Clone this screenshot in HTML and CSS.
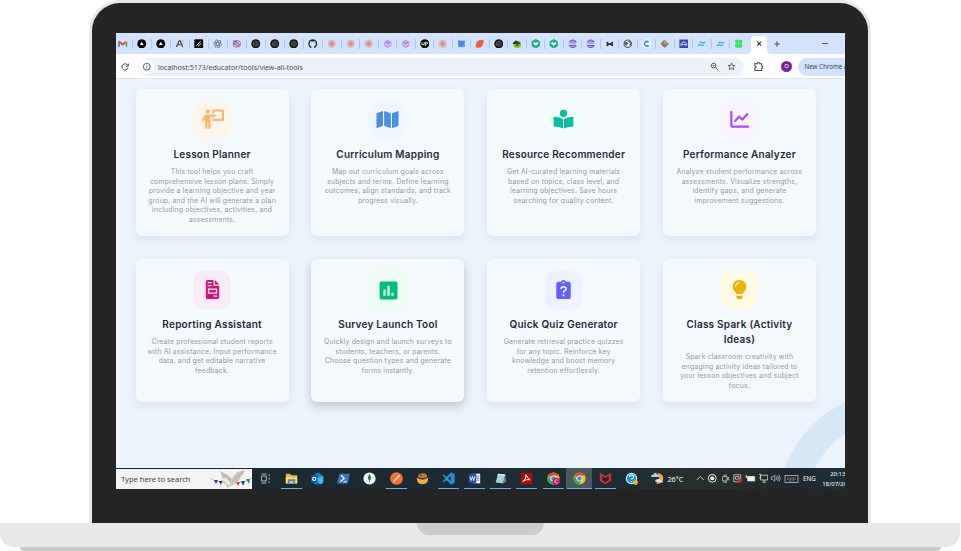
FILE: index.html
```html
<!DOCTYPE html>
<html lang="en">
<head>
<meta charset="utf-8">
<title>Educator tools</title>
<link rel="stylesheet" href="styles.css">
</head>
<body>
<svg class="defs" aria-hidden="true">
  <symbol id="gmail" viewBox="0 0 10 10"><path d="M1 8.500V2.600" stroke="#4285f4" stroke-width="1.800"/><path d="M9 8.500V2.600" stroke="#34a853" stroke-width="1.800"/><path d="M1 2.600L5 5.800L9 2.600" fill="none" stroke="#ea4335" stroke-width="1.900"/><path d="M8.100 2h1.800v1.800H8.100z" fill="#fbbc04"/></symbol>
  <symbol id="tri" viewBox="0 0 10 10"><circle cx="5" cy="5" r="4.700" fill="#000"/><path d="M5 3l2 3.300H3z" fill="#fff"/></symbol>
  <symbol id="ak" viewBox="0 0 10 10"><path d="M1.500 8.500L4.400 2h1L8 8.500M3 6h3" fill="none" stroke="#444" stroke-width="1.200"/><path d="M6.200 3.400L9 1.400M6.500 4.400l2.300.8" stroke="#b98567" stroke-width=".9"/></symbol>
  <symbol id="sq" viewBox="0 0 10 10"><rect x=".3" y=".3" width="9.400" height="9.400" rx="1.400" fill="#050505"/><path d="M2.500 7L7 2.400M4.300 7.500l3.400-3.200" stroke="#fff" stroke-width="1"/></symbol>
  <symbol id="atom" viewBox="0 0 10 10"><g fill="none" stroke="#6c7589" stroke-width=".8"><ellipse cx="5" cy="5" rx="4.500" ry="1.500" transform="rotate(10 5 5)"/><ellipse cx="5" cy="5" rx="4.500" ry="1.500" transform="rotate(70 5 5)"/><ellipse cx="5" cy="5" rx="4.500" ry="1.500" transform="rotate(130 5 5)"/></g></symbol>
  <symbol id="swirl" viewBox="0 0 10 10"><ellipse cx="5" cy="5" rx="3.800" ry="3.400" fill="none" stroke="#d0607f" stroke-width="1.100"/><path d="M1 2Q5 2 7 5T4 6 5.500 4" fill="none" stroke="#6a6fa3" stroke-width="1.100"/></symbol>
  <symbol id="gpt" viewBox="0 0 10 10"><circle cx="5" cy="5" r="4.700" fill="#101010"/><g fill="none" stroke="#8c8c8c" stroke-width=".6"><circle cx="5" cy="5" r="1.300"/><path d="M5 2.100l2.500 1.400v3L5 7.900 2.500 6.500v-3z"/></g></symbol>
  <symbol id="git" viewBox="0 0 10 10"><circle cx="5" cy="5" r="4.700" fill="#252b35"/><path d="M3.600 9.700V7.800C2 7.400 1.700 6.200 1.800 4.700c0-.7.3-1.100.6-1.500v-1.200l1.300.6h2.600l1.300-.6v1.200c.3.400.6.800.6 1.500.1 1.500-.2 2.700-1.800 3.100v1.900z" fill="#d3e3fd"/></symbol>
  <symbol id="claude" viewBox="0 0 10 10"><path d="M5 .6v8.800M.6 5h8.800M2.800 1.200l4.400 7.600M7.200 1.200L2.800 8.800M1.200 2.800l7.600 4.400M1.200 7.200l7.600-4.400" stroke="#df7a5e" stroke-width=".75"/></symbol>
  <symbol id="cube" viewBox="0 0 10 10"><path d="M5 .7l3.900 2.200v4.300L5 9.400 1.100 7.200V2.900z" fill="#b996ea"/><path d="M1.600 5.200L5 6.800l3.400-1.600" stroke="#f3e9ff" stroke-width=".8" fill="none"/></symbol>
  <symbol id="up" viewBox="0 0 10 10"><circle cx="5" cy="5" r="4.800" fill="#080808"/><path d="M2 3.500v2q1.200 1.400 2.400 0v-2M5.600 7.500v-4q2.800-.6 2.300 1.300-.7 1.200-2.200.3" fill="none" stroke="#fff" stroke-width=".9"/></symbol>
  <symbol id="flag" viewBox="0 0 10 10"><path d="M2 2h6.500L7.500 5l1 3H2z" fill="#438ee0" stroke="#438ee0" stroke-width=".6"/><path d="M1.800 1.200v7.300" stroke="#438ee0"/></symbol>
  <symbol id="leaf" viewBox="0 0 10 10"><path d="M2 3Q4 .6 9 .8 9.500 6 7 8.200 4.500 9.500 1 9q-.5-3 1-6z" fill="#f85c36"/></symbol>
  <symbol id="snake" viewBox="0 0 10 10"><path d="M.5 4.500L4 1.500l5 2L5 5z" fill="#223627"/><ellipse cx="5.500" cy="6.500" rx="4" ry="2.700" fill="#7acb13"/><path d="M1 4.500l5 .5 3-.7M4 6.600h3" stroke="#152c18" stroke-width=".9"/></symbol>
  <symbol id="teal" viewBox="0 0 10 10"><path d="M5 .6l3.800 2v4.800L5 9.500 1.200 7.400V2.600z" fill="#12b184" stroke="#12b184" stroke-linejoin="round"/><path d="M2 4.400l1.500-1.200L5 4.300l1.500-1.100L8 4.400l-3 3z" fill="#fff"/></symbol>
  <symbol id="globe" viewBox="0 0 10 10"><circle cx="5" cy="5" r="4.600" fill="#6b62d2"/><path d="M.5 3.600h9v2.800h-9z" fill="#edeaff"/><path d="M1.500 5h7" stroke="#8179d8" stroke-width=".9"/><path d="M3 2.300h4M3 7.900h4" stroke="#d6d2fa" stroke-width=".6"/></symbol>
  <symbol id="mm" viewBox="0 0 10 10"><path d="M2.300 7.500V3.600L5 5.800l2.700-2.200v3.900M2 7.300L4.500 5M5.500 5L8 7.300" fill="none" stroke="#252525" stroke-width="1.200"/></symbol>
  <symbol id="world" viewBox="0 0 10 10"><circle cx="5" cy="5" r="3.900" fill="#e8eefb" stroke="#555b66" stroke-width="1.200"/><path d="M1.500 3l3 .2 1 1.500L3.500 7 1.500 5zM6 1.600l-.5 1.500 2 1L6.500 7 8.500 6 8 2.500z" fill="#555b66"/></symbol>
  <symbol id="cc" viewBox="0 0 10 10"><circle cx="5" cy="5" r="4.800" fill="#fff"/><path d="M7 3.500a2.500 2.500 0 1 0 0 3" fill="none" stroke="#0994f4" stroke-width="1.700"/></symbol>
  <symbol id="color" viewBox="0 0 10 10"><path d="M.4 5L5 .6v4z" fill="#35a154"/><path d="M5 .6L9.600 5 5 6z" fill="#f29325"/><path d="M.4 5L5 4.500v5z" fill="#df4b4b"/><path d="M5 5h4.600L5 9.500z" fill="#2799a9"/></symbol>
  <symbol id="blue" viewBox="0 0 10 10"><path d="M.4.400h9.200v9.200H.4z" fill="#3647b8"/><path d="M2 7V5l3-2.300L8 5v2M3.500 7V5.500h3V7" stroke="#fff" fill="none" stroke-width=".8"/></symbol>
  <symbol id="wind" viewBox="0 0 10 10"><path d="M2.500 4.500Q3.700 2.600 5.300 3.600T8.700 3.300M1.200 7.200Q2.400 5.300 4 6.300T7.400 6" fill="none" stroke="#25afe5" stroke-width="1.300"/></symbol>
  <symbol id="green" viewBox="0 0 10 10"><path d="M1 1.300l3-.8 1 1 1-1 3 .8-.7 3.400.7 3.700-3 1-1-1-1 1-3-1 .7-3.700z" fill="#2ee859"/><path d="M5 1.500v7M2 5h6" stroke="#8dff9f" stroke-width=".5"/></symbol>
  <symbol id="chrome" viewBox="0 0 16 16"><circle cx="8" cy="8" r="7.500" fill="#fbc116"/><path d="M8 8L1.500 4.200A7.500 7.500 0 0 1 14.500 4.300H8z" fill="#e94335"/><path d="M1.500 4.200A7.500 7.500 0 0 0 7.400 15.500L10.500 10 8 8 4.600 9.500z" fill="#31a853"/><circle cx="8" cy="8" r="3.600" fill="#fff"/><circle cx="8" cy="8" r="2.800" fill="#4285f4"/></symbol>
</svg>

<div class="laptop">
  <div class="lid">
    <div class="screen">
      <header class="tabstrip">
        <div class="tabs">
          <i><svg><use href="#gmail"/></svg></i><i><svg><use href="#tri"/></svg></i><i><svg><use href="#tri"/></svg></i><i><svg><use href="#ak"/></svg></i><i><svg><use href="#sq"/></svg></i><i><svg><use href="#atom"/></svg></i><i><svg><use href="#swirl"/></svg></i><i><svg><use href="#gpt"/></svg></i><i><svg><use href="#gpt"/></svg></i><i><svg><use href="#gpt"/></svg></i><i><svg><use href="#git"/></svg></i><i><svg><use href="#claude"/></svg></i><i><svg><use href="#claude"/></svg></i><i><svg><use href="#claude"/></svg></i><i><svg><use href="#cube"/></svg></i><i><svg><use href="#cube"/></svg></i><i><svg><use href="#up"/></svg></i><i><svg><use href="#claude"/></svg></i><i><svg><use href="#flag"/></svg></i><i><svg><use href="#leaf"/></svg></i><i><svg><use href="#gpt"/></svg></i><i><svg><use href="#snake"/></svg></i><i><svg><use href="#teal"/></svg></i><i><svg><use href="#teal"/></svg></i><i><svg><use href="#globe"/></svg></i><i><svg><use href="#globe"/></svg></i><i><svg><use href="#mm"/></svg></i><i><svg><use href="#world"/></svg></i><i><svg><use href="#cc"/></svg></i><i><svg><use href="#color"/></svg></i><i><svg><use href="#blue"/></svg></i><i><svg><use href="#wind"/></svg></i><i><svg><use href="#wind"/></svg></i><i class="last"><svg><use href="#green"/></svg></i>
        </div>
        <div class="active-tab"><svg viewBox="0 0 22 18"><path d="M0 18Q3 17 3 13V4q0-4 4-4h8q4 0 4 4v9q0 4 3 5z" fill="#fff"/><path d="M9.200 5.700l4 4M13.200 5.700l-4 4" stroke="#333" stroke-width="1.100"/></svg></div>
        <svg class="newtab" viewBox="0 0 8 8"><path d="M1.200 4h5.600M4 1.200v5.600" stroke="#555" stroke-width="1.100"/></svg>
        <span class="minimise"></span>
      </header>

      <div class="toolbar">
        <svg class="reload" viewBox="0 0 10 10"><path d="M7.700 3.200A3.100 3.100 0 1 0 8 6" fill="none" stroke="#474747" stroke-width="1"/><path d="M8.300 1.500v2.600H5.700" fill="none" stroke="#474747" stroke-width="1"/></svg>
        <div class="omnibox">
          <span class="site"><svg viewBox="0 0 10 10"><circle cx="5" cy="5" r="3.600" fill="none" stroke="#444" stroke-width=".9"/><path d="M5 4.600v2.300M5 2.800v.9" stroke="#444" stroke-width=".9"/></svg></span>
          <span class="url">localhost:5173/educator/tools/view-all-tools</span>
          <svg class="omni-icon" viewBox="0 0 10 10"><circle cx="4" cy="4" r="2.600" fill="none" stroke="#484848" stroke-width="1"/><path d="M6 6l3 3M2.900 4h2.200" stroke="#484848" stroke-width="1"/></svg>
          <svg class="omni-icon star" viewBox="0 0 10 10"><path d="M5 1.200l1.100 2.500 2.700.3-2 1.800.6 2.700L5 7.100 2.600 8.500l.6-2.700-2-1.800 2.700-.3z" fill="none" stroke="#444" stroke-width=".9"/></svg>
        </div>
        <svg class="ext" viewBox="0 0 12 12"><path d="M2 3h2.700q0-1.300 1.300-1.300T7.300 3H9.500v2.500q1.200 0 1.200 1.200T9.500 8v2.300H2V8q1.300 0 1.300-1.300T2 5.500z" fill="none" stroke="#444" stroke-width="1.100"/></svg>
        <span class="divider"></span>
        <span class="avatar">O</span>
        <span class="update">New Chrome a</span>
      </div>

      <main class="page">
        <svg class="ring" viewBox="0 0 60 66"><circle cx="108" cy="105" r="101.200" fill="none" stroke="#d6e7f7" stroke-width="27.500"/></svg>
        <div class="grid">
          <article class="card">
            <div class="tile orange"><svg viewBox="0 0 24 24"><path d="M12.700 5.500V3.600q0-1 1-1H22q1 0 1 1v7.800q0 1-1 1h-8.300q-1 0-1-1V10.600" fill="none" stroke="currentColor" stroke-width="2.200"/><circle cx="7" cy="3.700" r="2.100"/><path d="M5.300 6.700h9.400q1.700 1.300 0 2.600H10v12.300H7.600v-6H6.700v6H4.300V11.200L2.600 14l-1.900-1.200L3.300 8q.8-1.300 2-1.300z"/></svg></div>
            <h2>Lesson Planner</h2>
            <p>This tool helps you craft<br>comprehensive lesson plans. Simply<br>provide a learning objective and year<br>group, and the AI will generate a plan<br>including objectives, activities, and<br>assessments.</p>
          </article>
          <article class="card">
            <div class="tile sky"><svg viewBox="0 0 24 24"><path d="M.5 5.500L7.300 3v15.500L.5 21zM8.500 3l7 2.500V21l-7-2.500zM16.700 5.500L23.500 3v15.500L16.700 21z"/></svg></div>
            <h2>Curriculum Mapping</h2>
            <p>Map out curriculum goals across<br>subjects and terms. Define learning<br>outcomes, align standards, and track<br>progress visually.</p>
          </article>
          <article class="card">
            <div class="tile mint"><svg viewBox="0 0 24 24"><circle cx="12" cy="5.500" r="3.800"/><path d="M1.700 9.500q6-.5 9.800 2.300v9.700Q8 19.400 1.700 19.400zM22.300 9.500q-6-.5-9.800 2.300v9.700Q16 19.400 22.300 19.400z"/></svg></div>
            <h2>Resource Recommender</h2>
            <p>Get AI-curated learning materials<br>based on topics, class level, and<br>learning objectives. Save hours<br>searching for quality content.</p>
          </article>
          <article class="card">
            <div class="tile violet"><svg viewBox="0 0 24 24"><path d="M3.500 4v14.500q0 1 1 1H21M7.500 13.500l4-4.500 3.500 3 5-5.500" fill="none" stroke="currentColor" stroke-width="2.300" stroke-linecap="round" stroke-linejoin="round"/></svg></div>
            <h2>Performance Analyzer</h2>
            <p>Analyze student performance across<br>assessments. Visualize strengths,<br>identify gaps, and generate<br>improvement suggestions.</p>
          </article>
          <article class="card">
            <div class="tile pink"><svg viewBox="0 0 24 24"><path fill-rule="evenodd" d="M7 2h6v6h6v12a2 2 0 0 1-2 2H7a2 2 0 0 1-2-2V4a2 2 0 0 1 2-2zm0 2.300v1.200h4V4.300zm0 3v1.200h4V7.300zM7.200 11v5.500h9.600V11zm1.300 1.300h7v2.900h-7zM13 18.300v1.200h4v-1.200z"/><path d="M14.300 2L19 6.700h-4.700z"/></svg></div>
            <h2>Reporting Assistant</h2>
            <p>Create professional student reports<br>with AI assistance. Input performance<br>data, and get editable narrative<br>feedback.</p>
          </article>
          <article class="card raised">
            <div class="tile green"><svg viewBox="0 0 24 24"><rect x="3.500" y="3.500" width="17" height="17" rx="2"/><path d="M8.200 11v6M12 7.500V17M15.800 14v3" stroke="#e9fcf2" stroke-width="2.100"/></svg></div>
            <h2>Survey Launch Tool</h2>
            <p>Quickly design and launch surveys to<br>students, teachers, or parents.<br>Choose question types and generate<br>forms instantly.</p>
          </article>
          <article class="card">
            <div class="tile indigo"><svg viewBox="0 0 24 24"><path d="M6.500 4h3a2.600 2.600 0 0 1 5 0h3q2 0 2 2v14q0 2-2 2h-11q-2 0-2-2V6q0-2 2-2z"/><circle cx="12" cy="4.800" r="1" fill="#eef1ff"/><path d="M9.300 11.500Q9.300 9.200 12 9.200t2.700 2.100q0 1.200-1.500 2-1.200.6-1.200 2M12 17v2" fill="none" stroke="#eef1ff" stroke-width="1.800"/></svg></div>
            <h2>Quick Quiz Generator</h2>
            <p>Generate retrieval practice quizzes<br>for any topic. Reinforce key<br>knowledge and boost memory<br>retention effortlessly.</p>
          </article>
          <article class="card">
            <div class="tile yellow"><svg viewBox="0 0 24 24"><path d="M12 2q6.700.300 7 7 0 3.500-2.500 5.500-1 1-1.300 2.300H8.800q-.3-1.300-1.300-2.300Q5 12.500 5 9q.3-6.700 7-7zM8.700 18.400h6.600q0 3.600-2.300 3.600h-2q-2.300 0-2.300-3.600z"/><path d="M7.800 9q.2-3.500 4-4" fill="none" stroke="#fffbe5" stroke-width="1.100" stroke-linecap="round"/></svg></div>
            <h2>Class Spark (Activity<br>Ideas)</h2>
            <p>Spark classroom creativity with<br>engaging activity ideas tailored to<br>your lesson objectives and subject<br>focus.</p>
          </article>
        </div>
      </main>

      <footer class="taskbar">
        <div class="search"><span>Type here to search</span>
          <svg viewBox="0 0 42 20"><path d="M0 9q7 5 17 4M24 14q10 0 18-5" fill="none" stroke="#999" stroke-width=".6"/><path d="M4 11h4l-2 4zM31 12h4l-2 5z" fill="#1d3d9c"/><path d="M9 12h3l-1 4z" fill="#222"/><path d="M13 12h3l-1 4z" fill="#efb527"/><path d="M26 13h4l-2 4z" fill="#df3532"/><path d="M36 10h4l-1 5z" fill="#269c50"/><path d="M13 10q-2-5-3-8 8 3 12 8 3-8 13-9-5 11-11 14l-7 4-1-4-4-3z" fill="#c9c3bd"/><path d="M12 4l9 8M33 3l-10 9M14 12l6 2" stroke="#aaa39d" stroke-width=".8"/><path d="M12 10q3-3 6 1l3 4-3 1z" fill="#eee9e4"/></svg>
        </div>
        <div class="apps">
          <i><svg viewBox="0 0 16 16"><path d="M3 5h6v6H3zM3 2.500h6M3 13.500h6M12.500 2.500v2.500m0 2v2.500m0 2v2" fill="none" stroke="#b7bec0" stroke-width="1.200"/></svg></i>
          <i class="open"><svg viewBox="0 0 16 16"><path d="M1 2h5l2 2h7v10H1z" fill="#f3b72b"/><path d="M1 6h14v8H1z" fill="#ffd969"/><path d="M3.500 14V9h9v5h-2.300v-2.500H6V14z" fill="#398fd5"/></svg></i>
          <i><svg viewBox="0 0 16 16"><path d="M5 2l5-1 5 4v8l-3 2H4V5z" fill="#1681d1"/><path d="M5 9l10-4v8l-3 2z" fill="#41bce9"/><path d="M0 4h8v9H0z" fill="#075ca8"/><circle cx="4" cy="8.500" r="2" fill="none" stroke="#fff" stroke-width="1.300"/></svg></i>
          <i><svg viewBox="0 0 16 16"><path d="M3 2h13l-3 12H0z" fill="#3e73c8"/><path d="M5 4l4 4-5 4M8 12h4" fill="none" stroke="#fff" stroke-width="1.400"/></svg></i>
          <i><svg viewBox="0 0 16 16"><circle cx="8" cy="8" r="7.500" fill="#f8fbf8"/><path d="M8 3q3.500 4 0 8-3.500-4 0-8zM8 11v2" fill="#167c52" stroke="#167c52" stroke-width=".6"/></svg></i>
          <i class="open"><svg viewBox="0 0 16 16"><circle cx="8" cy="8" r="7.800" fill="#ff6c37"/><path d="M4 12l7-8 1 1-6 6z" fill="#fff" stroke="#fff" stroke-width=".6"/></svg></i>
          <i><svg viewBox="0 0 16 16"><path d="M1 7q7 3 14 0 0 8-7 8T1 7z" fill="#f4b13b"/><path d="M2.500 6.500q-.5-5 5.500-5t5.500 5q-5.500 2-11 0z" fill="#c98036"/><circle cx="6" cy="4" r="1" fill="#351e15"/><path d="M3 8q5 2.500 10 0" stroke="#7d4922" fill="none"/></svg></i>
          <i class="open"><svg viewBox="0 0 16 16"><path d="M11 .5l4.500 2v11l-4.500 2-5.500-5.500-3.500 3-1.500-1L4.500 8 .5 4 2 3l3.500 3zm0 4.500L7.500 8 11 11z" fill="#1d94dc" fill-rule="evenodd"/></svg></i>
          <i class="open"><svg viewBox="0 0 16 16"><path d="M7 2h8v12H7z" fill="#f2f5fb"/><path d="M9 5h5M9 7.500h5M9 10h5" stroke="#4369ad"/><path d="M1 3l9-2v14l-9-2z" fill="#2857a5"/><path d="M2.500 5.500l1.300 5 1.700-5 1.500 5 1.500-5" fill="none" stroke="#fff"/></svg></i>
          <i class="open"><svg viewBox="0 0 16 16"><path d="M5 2l9 1-3 11-9-1z" fill="#98ccdc"/><path d="M5 2l9 1-1 2-9-1z" fill="#dcecee"/><path d="M14 3l1 9-4 2z" fill="#5c8c9e"/><path d="M5 6l6 1M4.500 9l6 1" stroke="#bfe2ea"/></svg></i>
          <i class="open"><svg viewBox="0 0 16 16"><rect x="1" y="1" width="14" height="14" rx="1.500" fill="#b70b08"/><path d="M7.500 3.500q2 5 5 6-5-1-9 2 4-2 4-8z" fill="none" stroke="#fff" stroke-width="1.200"/></svg></i>
          <i class="open"><svg viewBox="0 0 16 16"><use href="#chrome" width="16" height="16"/><circle cx="11.500" cy="11.500" r="4.500" fill="#ca166e"/><path d="M13 10a2 2 0 1 0 0 3" fill="none" stroke="#fff"/></svg></i>
          <i class="open current"><svg><use href="#chrome"/></svg></i>
          <i class="open"><svg viewBox="0 0 16 16"><path d="M1 1l7 4 7-4v10l-7 4-7-4z" fill="#d42c35"/><path d="M4 5l4 2.500L12 5v5l-4 2.500L4 10z" fill="#27242b"/></svg></i>
          <i><svg viewBox="0 0 16 16"><circle cx="8" cy="8" r="7" fill="#e9f7ff"/><circle cx="8" cy="8" r="5.800" fill="#2398d8"/><path d="M5.500 6q0-2.300 2.600-2.300t2.500 2.200Q10.500 7.500 8 9M8 11v1.500" fill="none" stroke="#fff" stroke-width="1.500"/><circle cx="13" cy="13" r="3" fill="#f3b52c"/></svg></i>
          <i><svg viewBox="0 0 16 16"><path d="M8 1q8 2 7 8-2 7-9 5 7-4 2-13z" fill="#f7a832"/><path d="M0 6q0-3 3-3 2-4 5 0 3 0 2 3z" fill="#a7cdf4"/><path d="M5 12q0-3 3-3 3-2 4 1 3 0 3 3z" fill="#d5e4f4"/></svg></i>
        </div>
        <span class="temp">26°C</span>
        <div class="tray">
          <svg viewBox="0 0 12 12"><path d="M2 8L6 4 10 8" fill="none" stroke="#ddd"/></svg>
          <svg viewBox="0 0 12 12"><circle cx="6" cy="6" r="4.500" fill="none" stroke="#eee" stroke-width="1.100"/><circle cx="6" cy="6" r="2.300" fill="#fff"/></svg>
          <svg viewBox="0 0 12 12"><path d="M3 4h5v5H3zM8 6l2-1v3L8 7M4 2.500h4M4 10.500h4" fill="none" stroke="#ccc" stroke-width=".9"/></svg>
          <svg viewBox="0 0 12 12"><path d="M2 2h8v8H2zM4 4h4v3H4z" fill="none" stroke="#ddd" stroke-width=".9"/><circle cx="9" cy="8.800" r="2.300" fill="#f3191d"/></svg>
          <svg viewBox="0 0 12 12"><path d="M3 4h8v5H3zM1 3v2h2M1.500 2v2" fill="#eee" stroke="#eee" stroke-width=".8"/></svg>
          <svg viewBox="0 0 12 12"><path d="M3 2.500h8v5.500H3zM1 1.500h2v4H1M5 10.500h4M7 8v2.500" fill="none" stroke="#ddd" stroke-width=".9"/></svg>
          <svg viewBox="0 0 12 12"><path d="M1.500 4.500h1.700L5.500 2.500v7L3.200 7.500H1.500zM7 4q1.500 2 0 4M8.700 3q2 3 0 6M10.300 2q2.600 4 0 8" fill="none" stroke="#ccc" stroke-width=".8"/></svg>
          <svg class="keys" viewBox="0 0 15 10"><rect x="1" y="1.500" width="13" height="7" fill="none" stroke="#bbb" stroke-width=".8"/><path d="M3 4h9M3 5.300h9M4.500 7h6" stroke="#aaa" stroke-width=".7" stroke-dasharray="1 .5"/></svg>
        </div>
        <span class="lang">ENG</span>
        <div class="clock"><span class="time">20:13</span><span>18/07/20</span></div>
      </footer>
    </div>
  </div>
  <div class="base"><span class="notch"></span></div>
  <div class="foot"></div>
</div>
</body>
</html>
```

FILE: styles.css
```css
* { box-sizing: border-box; }

body {
  margin: 0;
  background: #fff;
  font-family: "Noto Sans", "Open Sans", sans-serif;
  overflow: hidden;
}

svg { display: block; flex: none; }
.defs { position: absolute; width: 0; height: 0; }
i { font-style: normal; }

.laptop {
  width: 961px;
  height: 551px;
  display: flex;
  flex-direction: column;
}

.lid {
  width: 782px;
  height: 523px;
  margin-left: 89px;
  padding: 30px 23.500px 0;
  flex: none;
  background: #242424;
  border: 3px solid #e6e7e7;
  border-bottom: 0;
  border-radius: 31px 31px 0 0;
}

.screen {
  width: 729px;
  height: 456px;
  display: flex;
  flex-direction: column;
  overflow: hidden;
  background: #ebf3fc;
}

.tabstrip {
  height: 21px;
  flex: none;
  display: flex;
  align-items: center;
  background: #d3e2fd;
}

.tabs { display: flex; margin-left: -1.500px; }
.tabs i {
  width: 18.500px;
  height: 10px;
  flex: none;
  display: flex;
  align-items: center;
  justify-content: center;
  border-right: 1px solid #a9c8fa;
}
.tabs i:nth-child(-n+11) { width: 19px; }
.tabs i.last { border-color: transparent; }
.tabs svg { width: 9.500px; height: 9.500px; }

.active-tab { margin-left: -1px; align-self: flex-end; }
.active-tab svg { width: 22px; height: 18px; }
.newtab { width: 8px; height: 8px; margin-left: 3.500px; }
.minimise { width: 6px; height: 1px; margin-left: 41px; background: #555; }

.toolbar {
  height: 25px;
  flex: none;
  display: flex;
  align-items: center;
  padding-top: 1px;
  background: #fff;
  border-bottom: 1px solid #e3e7eb;
}
.reload { width: 10px; height: 10px; margin-left: 4px; }
.omnibox {
  width: 605.500px;
  height: 18px;
  margin-left: 8.500px;
  padding: 0 7.500px 0 1px;
  flex: none;
  display: flex;
  align-items: center;
  border-radius: 9px;
  background: #ecf0f9;
}
.site {
  width: 15px;
  height: 15px;
  display: grid;
  place-items: center;
  border-radius: 50%;
  background: #fff;
}
.site svg { width: 9.500px; height: 9.500px; }
.url {
  margin: 1px auto 0 4px;
  font-size: 7.050px;
  line-height: 10px;
  color: #4a4e54;
  white-space: nowrap;
}
.omni-icon { width: 9px; height: 9px; }
.star { margin-left: 8px; }
.ext { width: 11px; height: 11px; margin-left: 9px; }
.divider { width: 1px; height: 9px; margin-left: 7.500px; background: #d3e3fd; }
.avatar {
  width: 11px;
  height: 11px;
  margin-left: 10px;
  flex: none;
  border-radius: 50%;
  background: #7b1fa2;
  color: #fff;
  font-size: 6px;
  line-height: 11px;
  text-align: center;
}
.update {
  width: 90px;
  height: 18px;
  margin-left: 6px;
  padding-left: 6.500px;
  flex: none;
  border-radius: 9px;
  background: #d3e3fd;
  color: #31456b;
  font-size: 6.200px;
  line-height: 18px;
  white-space: nowrap;
}

.page {
  position: relative;
  height: 389px;
  flex: none;
  padding: 10px 28px 0 20px;
}
.ring { position: absolute; right: 0; bottom: 0; width: 60px; height: 66px; }

.grid {
  position: relative;
  display: grid;
  grid-template-columns: repeat(4, 153.200px);
  grid-template-rows: 147px 143px;
  gap: 23px 22.600px;
}

.card {
  display: flex;
  flex-direction: column;
  align-items: center;
  padding-top: 11.500px;
  border-radius: 6px;
  background: #f4f9fe;
  box-shadow: 0 3px 8px rgba(70, 100, 130, .09);
  font-family: Inter, "Open Sans", sans-serif;
  text-align: center;
  white-space: nowrap;
}
.card.raised { box-shadow: 0 4px 9px rgba(40, 60, 75, .25); }
.card h2 {
  margin: 8.500px 0 5px;
  font-size: 10px;
  font-weight: 600;
  line-height: 15px;
  letter-spacing: .23px;
  color: #1e293b;
}
.card p {
  margin: 0;
  font-size: 6.900px;
  line-height: 9.600px;
  letter-spacing: .17px;
  color: #94999c;
}

.tile {
  width: 38px;
  height: 38px;
  flex: none;
  display: grid;
  place-items: center;
  border-radius: 11px;
}
.tile svg { width: 23px; height: 23px; fill: currentColor; }
.orange { background: #fff5eb; color: #ffb66b; }
.sky { background: #eff6ff; color: #498fdf; }
.mint { background: #f0fdfa; color: #06bda6; }
.violet { background: #faf4ff; color: #ad46ff; }
.pink { background: #f8ebf6; color: #c7167c; }
.green { background: #ecfdf5; color: #00bc7d; transform: scale(1.100); }
.indigo { background: #eef1ff; color: #615fff; }
.yellow { background: #fffbe5; color: #f0b000; }

.taskbar {
  height: 21px;
  flex: none;
  display: flex;
  align-items: center;
  background: linear-gradient(90deg, #192830 0, #1d2d35 70%, #292f2c 78%, #242b29 88%, #1f2733 92%, #19303a 100%);
  color: #fff;
}
.search {
  width: 136.500px;
  height: 20px;
  flex: none;
  align-self: flex-end;
  display: flex;
  align-items: center;
  justify-content: space-between;
  background: #f3f3f3;
  color: #444;
  font-size: 7.550px;
  white-space: nowrap;
}
.search span { margin-left: 5.500px; }
.search svg { width: 42px; height: 20px; }

.apps { display: flex; align-self: stretch; }
.apps i {
  width: 26.200px;
  flex: none;
  display: grid;
  place-items: center;
  background: linear-gradient(#62aee3, #62aee3) center bottom / 0 1px no-repeat;
}
.apps .open { background-size: 21px 1px; }
.apps .current { background-color: #49575f; background-size: 25px 1px; }
.apps svg { width: 13px; height: 13px; }

.temp { width: 27px; flex: none; margin-left: -3.500px; font-size: 7.200px; }
.tray { display: flex; align-items: center; }
.tray svg { width: 10.500px; height: 10.500px; margin-right: 2.150px; }
.tray .keys { width: 15px; height: 10px; margin: 0 0 0 1px; }
.lang { margin-left: 4px; font-size: 6.200px; }
.clock {
  width: 60px;
  margin-left: 6.500px;
  flex: none;
  display: flex;
  flex-direction: column;
  font-size: 6px;
  line-height: 10px;
}
.time { padding-left: 8px; }

.base {
  width: 960px;
  height: 23.500px;
  flex: none;
  display: flex;
  justify-content: center;
  background: #e8e8e8;
  border-radius: 0 0 14px 14px;
}
.notch {
  width: 127px;
  height: 12px;
  background: #cbcbcb;
  border-radius: 0 0 12px 12px;
}
.foot {
  width: 921px;
  height: 3.500px;
  margin: .5px 0 0 20px;
  flex: none;
  background: #cbcbcb;
  border-radius: 0 0 5px 5px;
}
```
